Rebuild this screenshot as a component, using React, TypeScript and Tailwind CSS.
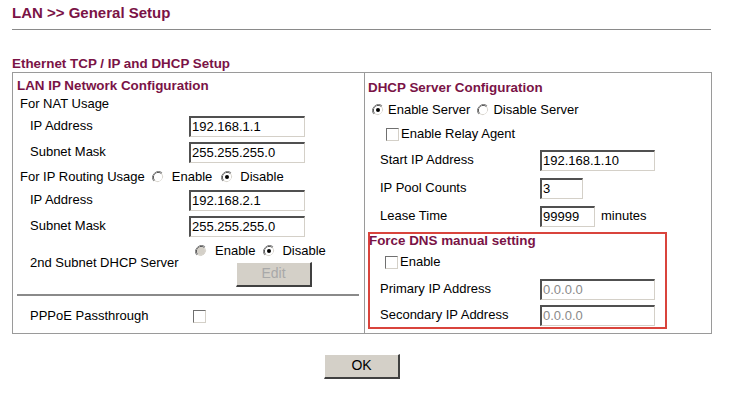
import React from 'react';

const Radio = ({ checked = false, disabled = false }: { checked?: boolean; disabled?: boolean }) => (
  <svg width="12" height="12" viewBox="0 0 12 12" className="shrink-0">
    <path d="M10.2 1.8 A6 6 0 0 0 1.8 10.2" fill="none" stroke="#808080" strokeWidth="1" />
    <path d="M9.5 2.5 A5 5 0 0 0 2.5 9.5" fill="none" stroke="#404040" strokeWidth="1" />
    <path d="M1.8 10.2 A6 6 0 0 0 10.2 1.8" fill="none" stroke="#ffffff" strokeWidth="1" />
    <path d="M2.5 9.5 A5 5 0 0 0 9.5 2.5" fill="none" stroke="#d4d0c8" strokeWidth="1" />
    <circle cx="6" cy="6" r="4" fill={disabled ? '#d4d0c8' : '#ffffff'} />
    {checked && <circle cx="6" cy="6" r="2" fill="#000000" />}
  </svg>
);

const Checkbox = () => (
  <span className="block w-[13px] h-[13px] shrink-0 bg-white border-t-[1.5px] border-l-[1.5px] border-r border-b border-t-[#707070] border-l-[#707070] border-r-[#d4d0c8] border-b-[#d4d0c8]" />
);

const Field = ({ value, w = 'w-[116px]', muted = false }: { value: string; w?: string; muted?: boolean }) => (
  <div
    className={`${w} h-[21px] bg-white border-t-2 border-l-2 border-r border-b border-t-[#505050] border-l-[#505050] border-r-[#d4d0c8] border-b-[#d4d0c8] flex items-center pl-[1px] text-[13px] leading-none ${muted ? 'text-[#8a8a8a]' : 'text-black'}`}
  >
    {value}
  </div>
);

const ClassicButton = ({ label, disabled = false }: { label: string; disabled?: boolean }) => (
  <div
    className={`w-[76px] h-[25px] bg-[#d4d0c8] border-t border-l border-r-2 border-b-2 border-t-white border-l-white border-r-[#404040] border-b-[#404040] flex items-center justify-center text-[14px] ${disabled ? 'text-[#a8a8a8]' : 'text-black'}`}
  >
    {label}
  </div>
);

const Heading = ({ children }: { children: React.ReactNode }) => (
  <span className="font-bold text-[13.4px] text-[#7a1346]">{children}</span>
);

const LeftRow = ({ label, h, children }: { label: string; h: string; children: React.ReactNode }) => (
  <div className={`${h} flex items-center pl-[17px]`}>
    <span className="w-[159px]">{label}</span>
    {children}
  </div>
);

const RightRow = ({ label, h, children, pl = 'pl-[15px]', lw = 'w-[160px]' }: { label: string; h: string; children: React.ReactNode; pl?: string; lw?: string }) => (
  <div className={`${h} flex items-center ${pl}`}>
    <span className={lw}>{label}</span>
    {children}
  </div>
);

export default function App() {
  return (
    <div className="w-[733px] h-[405px] bg-white px-3 text-black text-[13px] leading-tight" style={{ fontFamily: '"Liberation Sans", Arial, sans-serif' }}>
      <div className="h-[25px] pt-[2px] flex items-center">
        <span className="font-bold text-[15px] text-[#7a1346]">LAN &gt;&gt; General Setup</span>
      </div>
      <div className="mt-[4px] w-[699px] border-t border-[#8a8a8a]" />

      <div className="mt-[25px] h-[17px] flex items-center pt-[2px]">
        <Heading>Ethernet TCP / IP and DHCP Setup</Heading>
      </div>

      <div className="w-[700px] h-[262px] border border-[#9a9a9a] flex">
        {/* left column */}
        <div className="w-[352px] border-r border-[#9a9a9a] pt-[3px]">
          <div className="h-[20px] flex items-center pl-[4px]">
            <Heading>LAN IP Network Configuration</Heading>
          </div>
          <div className="h-[17px] flex items-center pl-[7px]">For NAT Usage</div>
          <LeftRow label="IP Address" h="h-[26px]">
            <Field value="192.168.1.1" />
          </LeftRow>
          <LeftRow label="Subnet Mask" h="h-[26px]">
            <Field value="255.255.255.0" />
          </LeftRow>
          <div className="h-[24px] flex items-center pl-[7px]">
            <span>For IP Routing Usage</span>
            <span className="ml-[7px]"><Radio /></span>
            <span className="ml-[8px]">Enable</span>
            <span className="ml-[9px]"><Radio checked /></span>
            <span className="ml-[7px]">Disable</span>
          </div>
          <LeftRow label="IP Address" h="h-[22px]">
            <Field value="192.168.2.1" />
          </LeftRow>
          <LeftRow label="Subnet Mask" h="h-[30px]">
            <Field value="255.255.255.0" />
          </LeftRow>
          <div className="h-[50px] flex pl-[17px]">
            <div className="w-[159px] flex items-center pb-[6px]">2nd Subnet DHCP Server</div>
            <div className="flex flex-col">
              <div className="h-[20px] flex items-center pl-[6px]">
                <Radio disabled />
                <span className="ml-[8px]">Enable</span>
                <span className="ml-[8px]"><Radio checked /></span>
                <span className="ml-[7px]">Disable</span>
              </div>
              <div className="mt-[1px] ml-[47px]">
                <ClassicButton label="Edit" disabled />
              </div>
            </div>
          </div>
          <div className="h-[10px] pt-[3px] pl-[4px]">
            <div className="w-[342px] border-t-2 border-[#8a8a8a]" />
          </div>
          <LeftRow label="PPPoE Passthrough" h="h-[31px]">
            <span className="ml-[4px]"><Checkbox /></span>
          </LeftRow>
        </div>

        {/* right column */}
        <div className="flex-1 pt-[5px]">
          <div className="h-[20px] flex items-center pl-[3px]">
            <Heading>DHCP Server Configuration</Heading>
          </div>
          <div className="h-[24px] flex items-center pl-[7px]">
            <Radio checked />
            <span className="ml-[4px]">Enable Server</span>
            <span className="ml-[7px]"><Radio /></span>
            <span className="ml-[4px]">Disable Server</span>
          </div>
          <div className="h-[24px] flex items-center pl-[21px]">
            <Checkbox />
            <span className="ml-[2px]">Enable Relay Agent</span>
          </div>
          <RightRow label="Start IP Address" h="h-[28px]">
            <Field value="192.168.1.10" w="w-[115px]" />
          </RightRow>
          <RightRow label="IP Pool Counts" h="h-[28px]">
            <Field value="3" w="w-[43px]" />
          </RightRow>
          <RightRow label="Lease Time" h="h-[28px]">
            <Field value="99999" w="w-[55px]" />
            <span className="ml-[6px]">minutes</span>
          </RightRow>

          <div className="mt-[2px] ml-[3px] w-[299px] border-2 border-[#d9443c]">
            <div className="h-[15px] flex items-center -ml-[1px]">
              <Heading>Force DNS manual setting</Heading>
            </div>
            <div className="h-[26px] flex items-center pl-[15px]">
              <Checkbox />
              <span className="ml-[2px]">Enable</span>
            </div>
            <RightRow label="Primary IP Address" h="h-[28px]" pl="pl-[10px]">
              <Field value="0.0.0.0" w="w-[115px]" muted />
            </RightRow>
            <RightRow label="Secondary IP Address" h="h-[24px]" pl="pl-[10px]">
              <Field value="0.0.0.0" w="w-[115px]" muted />
            </RightRow>
          </div>
        </div>
      </div>

      <div className="w-[700px] mt-[20px] flex justify-center">
        <ClassicButton label="OK" />
      </div>
    </div>
  );
}
